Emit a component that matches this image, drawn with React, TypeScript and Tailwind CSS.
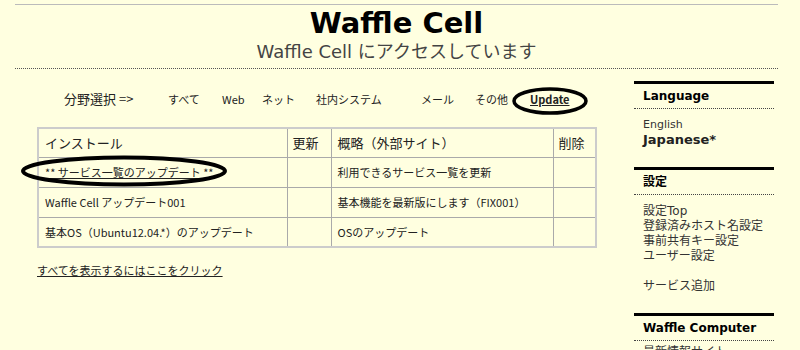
import React from "react";

const JP = '"DejaVu Sans", "Noto Sans CJK JP", sans-serif';
const JP2 = '"Noto Sans CJK JP", sans-serif';

function SideHead({ children }: { children: React.ReactNode }) {
  return (
    <div>
      <div className="h-[3px] bg-black" />
      <div className="px-[9px] pt-[3px] pb-[3px] text-[12px] font-bold leading-[18px] text-black">{children}</div>
      <div className="border-b border-dotted border-[#444]" />
    </div>
  );
}

export default function App() {
  const rows = [
    { name: "** サービス一覧のアップデート **", link: true, desc: "利用できるサービス一覧を更新" },
    { name: "Waffle Cell アップデート001", link: false, desc: "基本機能を最新版にします（FIX001）" },
    { name: "基本OS（Ubuntu12.04.*）のアップデート", link: false, desc: "OSのアップデート" },
  ];
  return (
    <div className="relative h-[350px] w-[800px] overflow-hidden bg-[#ffffe0]" style={{ fontFamily: JP }}>
      <div className="ml-[15px] w-[763px] pt-[4px]">
        <div className="border-t border-[#bbbbbb]" />
        <div className="flex flex-col items-center pb-[5px]">
          <div className="mt-[1px] text-[29px] font-bold leading-[35px] text-black">Waffle Cell</div>
          <div className="text-[18px] leading-[22px] text-[#444]">Waffle Cell にアクセスしています</div>
        </div>
        <div className="border-b border-dotted border-[#555]" />
        <div className="flex">
          <div className="w-[619px]">
            <div className="mt-[22px] flex items-center text-[#222] leading-[16px]" style={{ fontFamily: JP2 }}>
              <span className="ml-[49px] w-[104px] text-[13px]">分野選択 =&gt;</span>
              <span className="w-[54px] text-[11px]">すべて</span>
              <span className="w-[40px] text-[11px]">Web</span>
              <span className="w-[54px] text-[11px]">ネット</span>
              <span className="w-[105px] text-[11px]">社内システム</span>
              <span className="w-[54px] text-[11px]">メール</span>
              <span className="w-[55px] text-[11px]">その他</span>
              <span className="text-[11px] font-bold underline">Update</span>
            </div>
            <table
              className="mt-[20px] ml-[22px] border-collapse border-2 border-[#cccccc] text-[#222]"
              style={{ fontFamily: JP2 }}
            >
              <thead>
                <tr className="h-[29px]">
                  <th className="w-[249px] border border-[#aaaaaa] px-[6px] text-left text-[13px] font-normal leading-[16px]">インストール</th>
                  <th className="w-[44px] border border-[#aaaaaa] px-[5px] text-left text-[13px] font-normal leading-[16px]">更新</th>
                  <th className="w-[222px] border border-[#aaaaaa] px-[6px] text-left text-[13px] font-normal leading-[16px]">概略（外部サイト）</th>
                  <th className="w-[43px] border border-[#aaaaaa] px-[5px] text-left text-[13px] font-normal leading-[16px]">削除</th>
                </tr>
              </thead>
              <tbody>
                {rows.map((r) => (
                  <tr key={r.name} className="h-[30px]">
                    <td className="border border-[#aaaaaa] px-[6px] text-[11px] leading-[14px]">
                      <span className={r.link ? "underline" : ""}>{r.name}</span>
                    </td>
                    <td className="border border-[#aaaaaa]" />
                    <td className="border border-[#aaaaaa] px-[6px] text-[11px] leading-[14px]">{r.desc}</td>
                    <td className="border border-[#aaaaaa]" />
                  </tr>
                ))}
              </tbody>
            </table>
            <div className="mt-[15px] ml-[22px] text-[11px] leading-[14px] text-[#222] underline" style={{ fontFamily: JP2 }}>
              すべてを表示するにはここをクリック
            </div>
          </div>
          <div className="mt-[12px] w-[140px]">
            <SideHead>Language</SideHead>
            <div className="pl-[9px] pt-[8px] pb-[19px] text-[#333]">
              <div className="text-[11px] leading-[15px]">English</div>
              <div className="text-[13px] font-bold leading-[16px] text-[#222]">Japanese*</div>
            </div>
            <SideHead>設定</SideHead>
            <div className="whitespace-nowrap pl-[9px] pt-[9px] pb-[19px] text-[12px] leading-[15px] text-[#333]">
              <div>設定Top</div>
              <div>登録済みホスト名設定</div>
              <div>事前共有キー設定</div>
              <div>ユーザー設定</div>
              <div className="mt-[15px]">サービス追加</div>
            </div>
            <SideHead>Waffle Computer</SideHead>
            <div className="pl-[9px] pt-[4px] text-[12px] leading-[15px] text-[#333]">最新情報サイト</div>
          </div>
        </div>
      </div>
      <svg className="pointer-events-none absolute left-0 top-0" width="800" height="350">
        <ellipse cx="550" cy="101" rx="36" ry="12" fill="none" stroke="#000" strokeWidth="3.5" />
        <ellipse cx="124" cy="171" rx="101" ry="13.5" fill="none" stroke="#000" strokeWidth="4" />
      </svg>
    </div>
  );
}
